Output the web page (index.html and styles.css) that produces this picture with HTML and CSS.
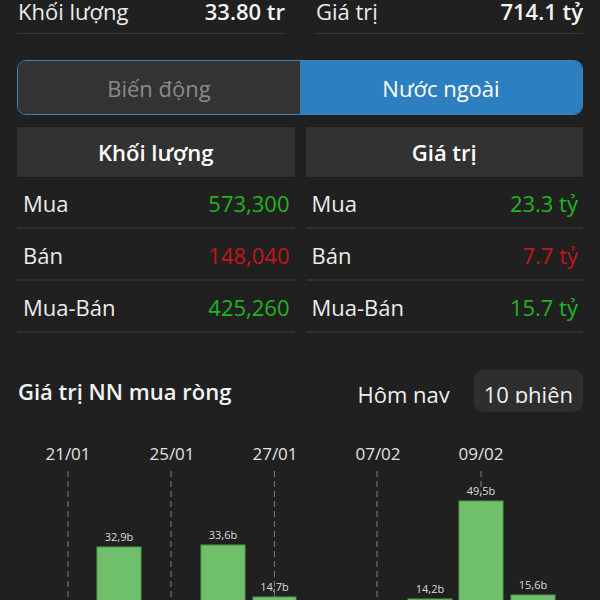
FILE: index.html
```html
<!DOCTYPE html>
<html lang="vi">
<head>
    <meta charset="UTF-8">
    <meta name="viewport" content="width=device-width, initial-scale=1.0">
    <title>Nước ngoài</title>
    <link rel="stylesheet" href="styles.css">
</head>
<body>
    <div class="page">
        <div class="summary">
            <div class="stat"><span>Khối lượng</span><b>33.80 tr</b></div>
            <div class="stat"><span>Giá trị</span><b>714.1 tỷ</b></div>
        </div>

        <div class="segment">
            <div class="seg">Biến động</div>
            <div class="seg active">Nước ngoài</div>
        </div>

        <div class="tables">
            <div class="table">
                <div class="head">Khối lượng</div>
                <div class="row"><span>Mua</span><span class="up">573,300</span></div>
                <div class="row"><span>Bán</span><span class="down">148,040</span></div>
                <div class="row"><span>Mua-Bán</span><span class="up">425,260</span></div>
            </div>
            <div class="table">
                <div class="head">Giá trị</div>
                <div class="row"><span>Mua</span><span class="up">23.3 tỷ</span></div>
                <div class="row"><span>Bán</span><span class="down">7.7 tỷ</span></div>
                <div class="row"><span>Mua-Bán</span><span class="up">15.7 tỷ</span></div>
            </div>
        </div>

        <div class="section">
            <h2>Giá trị NN mua ròng</h2>
            <div class="tabs">
                <div class="tab"><span>Hôm nay</span></div>
                <div class="tab active"><span>10 phiên</span></div>
            </div>
        </div>

        <svg class="chart" width="566" height="220" viewBox="0 0 566 220">
            <g class="dates">
                <text x="51" y="31">21/01</text>
                <text x="155" y="31">25/01</text>
                <text x="258" y="31">27/01</text>
                <text x="361" y="31">07/02</text>
                <text x="464" y="31">09/02</text>
            </g>
            <g class="grid">
                <line x1="51" y1="42" x2="51" y2="220"/>
                <line x1="154" y1="42" x2="154" y2="220"/>
                <line x1="257.5" y1="42" x2="257.5" y2="220"/>
                <line x1="360" y1="42" x2="360" y2="220"/>
                <line x1="464" y1="42" x2="464" y2="220"/>
            </g>
            <g class="bars">
                <rect x="80" y="118" width="44" height="91"/>
                <rect x="184" y="116" width="44" height="93"/>
                <rect x="236" y="168" width="43" height="41"/>
                <rect x="391" y="170" width="44" height="39"/>
                <rect x="442" y="72" width="44" height="137"/>
                <rect x="494" y="166" width="44" height="43"/>
            </g>
            <g class="values">
                <text x="102" y="112">32,9b</text>
                <text x="206" y="110">33,6b</text>
                <text x="257.5" y="162">14,7b</text>
                <text x="413" y="164">14,2b</text>
                <text x="464" y="66">49,5b</text>
                <text x="516" y="160">15,6b</text>
            </g>
        </svg>
    </div>
</body>
</html>
```

FILE: styles.css
```css
html, body { margin: 0; height: 600px; overflow: hidden; }
body { background: #202020; color: #ececec; font-family: "Open Sans", "Noto Sans", sans-serif; font-size: 22px; }
.page { padding: 0 17px; }

.summary { display: grid; grid-template-columns: 1fr 1fr; gap: 30px; margin-top: -4px; }
.stat { display: flex; justify-content: space-between; line-height: 30px; padding: 0 0 7px 1px; border-bottom: 1px solid #363636; }
.stat b { font-weight: 600; color: #f4f4f4; }

.segment { display: flex; margin-top: 26px; height: 55px; border: 1.5px solid #3b82b8; border-radius: 9px; overflow: hidden; box-sizing: border-box; }
.seg { flex: 1; display: flex; align-items: center; justify-content: center; background: #333333; color: #8a8a8a; }
.seg.active { background: #2c80c2; color: #fff; }

.tables { display: grid; grid-template-columns: 1fr 1fr; gap: 11px; margin-top: 12px; }
.head { height: 50px; display: flex; align-items: center; justify-content: center; background: #323232; font-weight: 600; color: #fff; }
.row { height: 50px; display: flex; align-items: center; justify-content: space-between; padding: 0 5px 0 6px; border-bottom: 2px solid #2f2f2f; }
.row span { position: relative; top: 1px; }
.up { color: #1fb51f; }
.down { color: #c3161b; }

.section { display: flex; align-items: center; justify-content: space-between; margin-top: 37px; }
.section h2 { margin: 0 0 0 1px; font-size: 22px; font-weight: 600; line-height: 30px; color: #f2f2f2; }
.tabs { display: flex; gap: 14px; }
.tab { padding: 9px 10px 9px; border-radius: 9px; }
.tab span { display: block; height: 24px; line-height: 30px; overflow: hidden; color: #f0f0f0; }
.tab.active { background: #2e2e2e; }

.chart { display: block; margin-top: 17px; font-family: "Open Sans", sans-serif; }
.dates text { font-size: 17px; fill: #e2e2e2; text-anchor: middle; }
.grid line { stroke: #6e6e6e; stroke-width: 1.2; stroke-dasharray: 6 4; }
.bars rect { fill: #70bf6b; stroke: #4f9c4b; stroke-width: 1; }
.values text { font-size: 11px; fill: #dcdcdc; text-anchor: middle; }
```
